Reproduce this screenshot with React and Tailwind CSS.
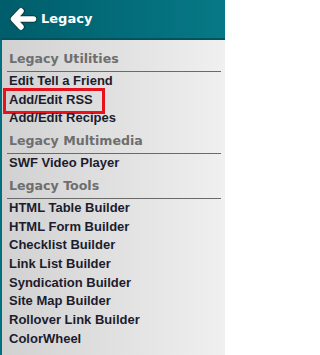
import React from "react";

const sections = [
  { title: "Legacy Utilities", items: ["Edit Tell a Friend", "Add/Edit RSS", "Add/Edit Recipes"] },
  { title: "Legacy Multimedia", items: ["SWF Video Player"] },
  {
    title: "Legacy Tools",
    items: [
      "HTML Table Builder",
      "HTML Form Builder",
      "Checklist Builder",
      "Link List Builder",
      "Syndication Builder",
      "Site Map Builder",
      "Rollover Link Builder",
      "ColorWheel",
    ],
  },
];

function BackArrow() {
  const d = "M11 3 L3.5 11 L11 19 M4.5 11 L23.5 11";
  return (
    <svg width="27" height="22" viewBox="0 0 27 22" className="shrink-0">
      <path d={d} fill="none" stroke="#0b3a42" strokeWidth="7.5" strokeLinecap="round" strokeLinejoin="round" />
      <path d={d} fill="none" stroke="#ffffff" strokeWidth="5.5" strokeLinecap="round" strokeLinejoin="round" />
    </svg>
  );
}

export default function App() {
  return (
    <div className="w-[225px] h-[355px] overflow-hidden flex flex-col font-['Liberation_Sans',Arial,sans-serif]">
      <div className="h-[40px] shrink-0 flex items-center gap-[4px] pl-[10px] pb-[1px] bg-gradient-to-r from-[#005d6b] to-[#077986] border-b-2 border-[#00535e]">
        <BackArrow />
        <span className="font-['DejaVu_Sans',Verdana,sans-serif] font-bold text-[13px] text-white">Legacy</span>
      </div>
      <div className="flex-1 border-l-2 border-[#00707d] bg-gradient-to-r from-[#d1d1d1] to-[#f0f0f0] pt-[6px] pl-[5px] pr-[4px]">
        {sections.map(sec => (
          <div key={sec.title}>
            <div className="pt-[4px] pb-[3px] pl-[2px] leading-[18px] border-b border-[#6a6a6a] font-['DejaVu_Sans',Verdana,sans-serif] font-bold text-[12.6px] text-[#6e6e6e]">
              {sec.title}
            </div>
            {sec.items.map(it => (
              <div key={it} className="relative pl-[2px] leading-[18.7px] font-bold text-[13px] text-[#1c1c2e]">
                {it}
                {it === "Add/Edit RSS" && (
                  <div className="absolute top-[-3px] bottom-[-5px] left-[-4px] w-[102px] border-[3px] border-[#e8121e]" />
                )}
              </div>
            ))}
          </div>
        ))}
      </div>
    </div>
  );
}
